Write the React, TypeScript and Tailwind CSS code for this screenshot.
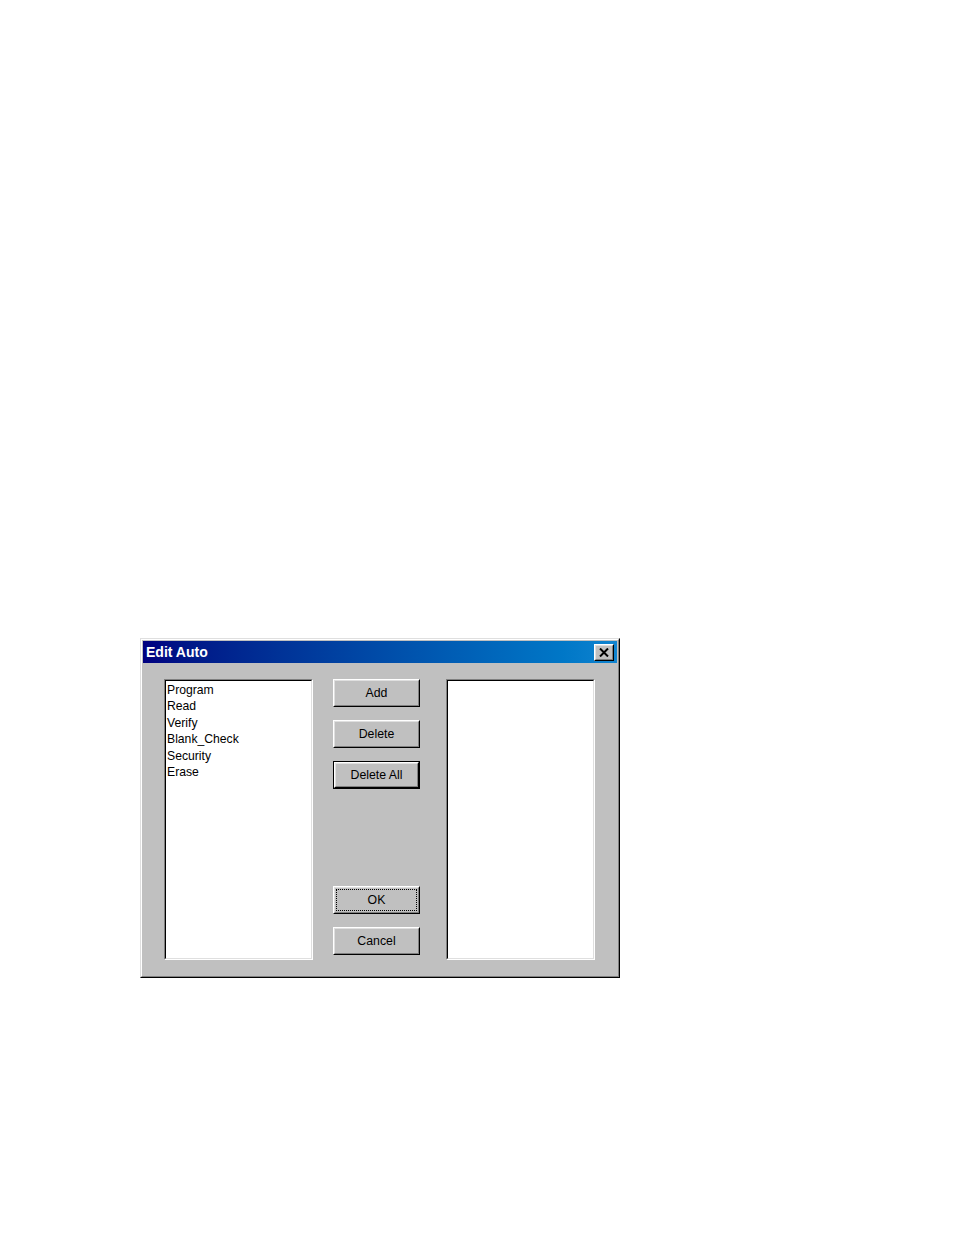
import React from 'react'

const font = { fontFamily: '"Liberation Sans", Arial, sans-serif' }

const items = ['Program', 'Read', 'Verify', 'Blank_Check', 'Security', 'Erase']

function WinButton({ label, isDefault, focused }: { label: string; isDefault?: boolean; focused?: boolean }) {
    // classic raised bevel, default button gets a black frame
    const bevel = (
        <div className="w-full h-full border border-t-white border-l-white border-r-black border-b-black">
            <div className="w-full h-full border border-t-[#dfdfdf] border-l-[#dfdfdf] border-r-[#808080] border-b-[#808080] p-[1px]">
                <div className={`w-full h-full flex items-center justify-center text-[12.3px] text-black ${focused ? 'border border-dotted border-black' : ''}`}>
                    {label}
                </div>
            </div>
        </div>
    )
    if (isDefault) {
        return <div className="w-[87px] h-[28px] border border-black">{bevel}</div>
    }
    return <div className="w-[87px] h-[28px]">{bevel}</div>
}

function ListBox({ children }: { children?: React.ReactNode }) {
    return (
        <div className="w-[149px] h-[281px] border border-t-[#808080] border-l-[#808080] border-r-white border-b-white">
            <div className="w-full h-full border border-t-[#000000] border-l-[#000000] border-r-[#dfdfdf] border-b-[#dfdfdf] bg-white px-[1px] pt-[1px]">
                {children}
            </div>
        </div>
    )
}

export default function App() {
    return (
        <div className="min-h-[1235px] bg-white pt-[638px] pl-[140px]" style={font}>
            {/* Dialog frame */}
            <div className="w-[480px] h-[340px] bg-[#c0c0c0] border border-t-[#dfdfdf] border-l-[#dfdfdf] border-r-black border-b-black">
                <div className="w-full h-full border border-t-white border-l-white border-r-[#808080] border-b-[#808080] p-[1px] flex flex-col">
                    {/* Title bar */}
                    <div className="h-[22px] flex items-center justify-between bg-linear-to-r from-[#000080] to-[#1084d0] pl-[3px] pr-[3px]">
                        <span className="text-white font-bold text-[14px] leading-none">Edit Auto</span>
                        <div className="w-[20px] h-[17px] border border-t-white border-l-white border-r-black border-b-black">
                            <div className="w-full h-full bg-[#c0c0c0] border border-t-[#dfdfdf] border-l-[#dfdfdf] border-r-[#808080] border-b-[#808080] flex items-center justify-center">
                                <svg width="10" height="9" viewBox="0 0 10 9">
                                    <path d="M1 0.5 L9 8.5 M9 0.5 L1 8.5" stroke="black" strokeWidth="2" />
                                </svg>
                            </div>
                        </div>
                    </div>

                    {/* Body */}
                    <div className="flex pt-[16px] pl-[21px]">
                        <ListBox>
                            <div className="text-[12.2px] leading-[16.4px] text-black">
                                {items.map((it) => (
                                    <div key={it}>{it}</div>
                                ))}
                            </div>
                        </ListBox>

                        <div className="ml-[20px] flex flex-col">
                            <div className="flex flex-col gap-[13px]">
                                <WinButton label="Add" />
                                <WinButton label="Delete" />
                                <WinButton label="Delete All" isDefault />
                            </div>
                            <div className="mt-[97px] flex flex-col gap-[13px]">
                                <WinButton label="OK" focused />
                                <WinButton label="Cancel" />
                            </div>
                        </div>

                        <div className="ml-[26px]">
                            <ListBox />
                        </div>
                    </div>
                </div>
            </div>
        </div>
    )
}
